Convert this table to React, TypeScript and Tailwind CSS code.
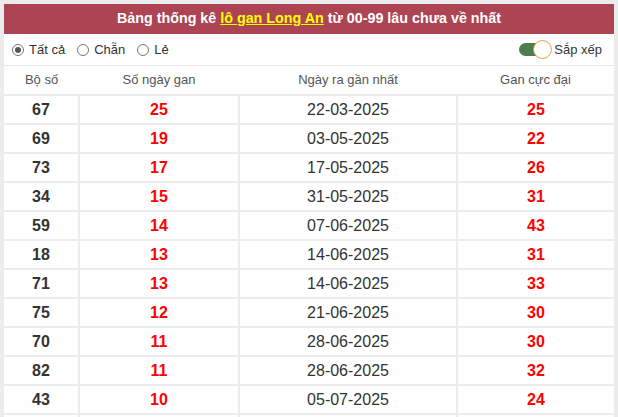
import { useState } from 'react';

const ROWS = [
  ['67', '25', '22-03-2025', '25'],
  ['69', '19', '03-05-2025', '22'],
  ['73', '17', '17-05-2025', '26'],
  ['34', '15', '31-05-2025', '31'],
  ['59', '14', '07-06-2025', '43'],
  ['18', '13', '14-06-2025', '31'],
  ['71', '13', '14-06-2025', '33'],
  ['75', '12', '21-06-2025', '30'],
  ['70', '11', '28-06-2025', '30'],
  ['82', '11', '28-06-2025', '32'],
  ['43', '10', '05-07-2025', '24'],
  ['', '', '', ''],
];

const FILTERS = ['Tất cả', 'Chẵn', 'Lẻ'];

export default function App() {
  const [filter, setFilter] = useState('Tất cả');
  const [sorted, setSorted] = useState(true);

  return (
    <div className="h-[417px] overflow-hidden bg-[#ececec] px-[4px] pt-[4px] font-['Liberation_Sans',Arial,sans-serif]">
      <div className="bg-white">
        {/* Title */}
        <div className="flex h-[30px] items-center justify-center bg-[#ad4454] text-[14.3px] font-bold text-white">
          Bảng thống kê&nbsp;
          <span className="text-[#ffff00] underline">lô gan Long An</span>
          &nbsp;từ 00-99 lâu chưa về nhất
        </div>

        {/* Filters */}
        <div className="flex h-[32px] items-center justify-between border-b border-[#e6e6e6] pl-[8px] pr-[12px] text-[13px] text-[#333]">
          <div className="flex items-center gap-[12px]">
            {FILTERS.map((f) => (
              <label key={f} className="flex cursor-pointer items-center gap-[5px]" onClick={() => setFilter(f)}>
                <span className="flex h-[12px] w-[12px] items-center justify-center rounded-full border border-[#777] bg-white">
                  {filter === f && <span className="h-[6px] w-[6px] rounded-full bg-[#555]" />}
                </span>
                {f}
              </label>
            ))}
          </div>
          <div className="flex items-center gap-[2px]">
            <button
              onClick={() => setSorted(!sorted)}
              className={`relative h-[13px] w-[30px] rounded-full ${sorted ? 'bg-[#4e7d50]' : 'bg-[#bbb]'}`}
            >
              <span
                className={`absolute top-[-3px] h-[19px] w-[19px] rounded-full border-[1.5px] border-[#f0a040] bg-white ${sorted ? 'right-[-3px]' : 'left-[-3px]'}`}
              />
            </button>
            <span className="ml-[3px]">Sắp xếp</span>
          </div>
        </div>

        {/* Table */}
        <table className="w-full table-fixed border-collapse">
          <colgroup>
            <col className="w-[75px]" />
            <col className="w-[160px]" />
            <col className="w-[218px]" />
            <col />
          </colgroup>
          <thead>
            <tr className="h-[29px] text-[13px] text-[#555]">
              <th className="border-b-2 border-[#ececec] font-normal">Bộ số</th>
              <th className="border-b-2 border-[#ececec] font-normal">Số ngày gan</th>
              <th className="border-b-2 border-[#ececec] font-normal">Ngày ra gần nhất</th>
              <th className="border-b-2 border-[#ececec] font-normal">Gan cực đại</th>
            </tr>
          </thead>
          <tbody>
            {ROWS.map((r, i) => (
              <tr key={i} className="h-[29px] text-center text-[16px]">
                <td className="border-2 border-l-0 border-t-0 border-[#ececec] font-bold text-[#333]">{r[0]}</td>
                <td className="border-2 border-t-0 border-[#ececec] font-bold text-[#ff0000]">{r[1]}</td>
                <td className="border-2 border-t-0 border-[#ececec] text-[#333]">{r[2]}</td>
                <td className="border-2 border-r-0 border-t-0 border-[#ececec] font-bold text-[#ff0000]">{r[3]}</td>
              </tr>
            ))}
          </tbody>
        </table>
      </div>
    </div>
  );
}
